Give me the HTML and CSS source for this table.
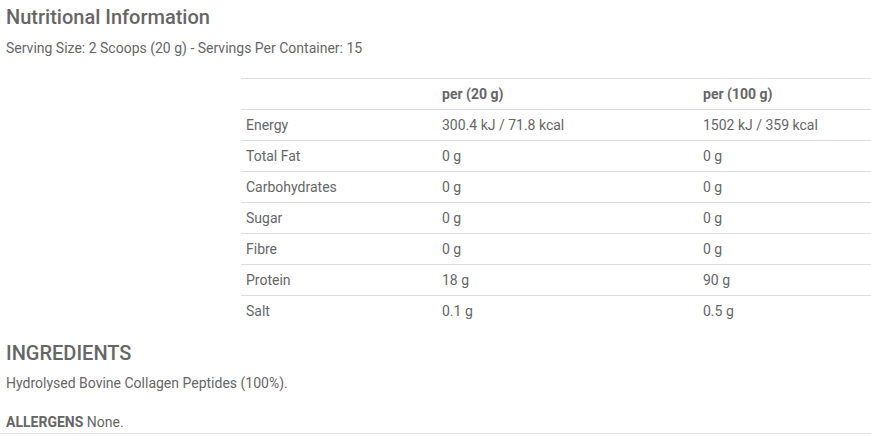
FILE: index.html
```html
<!DOCTYPE html>
<html>
<head>
<meta charset="utf-8">
<link rel="stylesheet" href="styles.css">
</head>
<body>
<div class="page">
  <h2 class="title">Nutritional Information</h2>
  <p class="serving">Serving Size: 2 Scoops (20 g) - Servings Per Container: 15</p>
  <table class="nutri">
    <colgroup>
      <col class="c1"><col class="c2"><col class="c3">
    </colgroup>
    <thead>
      <tr><th></th><th>per (20 g)</th><th>per (100 g)</th></tr>
    </thead>
    <tbody>
      <tr><td>Energy</td><td>300.4 kJ / 71.8 kcal</td><td>1502 kJ / 359 kcal</td></tr>
      <tr><td>Total Fat</td><td>0 g</td><td>0 g</td></tr>
      <tr><td>Carbohydrates</td><td>0 g</td><td>0 g</td></tr>
      <tr><td>Sugar</td><td>0 g</td><td>0 g</td></tr>
      <tr><td>Fibre</td><td>0 g</td><td>0 g</td></tr>
      <tr><td>Protein</td><td>18 g</td><td>90 g</td></tr>
      <tr><td>Salt</td><td>0.1 g</td><td>0.5 g</td></tr>
    </tbody>
  </table>
  <h2 class="title upper">INGREDIENTS</h2>
  <p class="ingredients">Hydrolysed Bovine Collagen Peptides (100%).</p>
  <p class="allergens"><strong>ALLERGENS</strong> None.</p>
</div>
</body>
</html>
```
FILE: styles.css
```css
html, body {
  margin: 0;
  padding: 0;
  background: #fff;
}
body {
  font-family: Roboto, "Liberation Sans", sans-serif;
  color: #666;
  font-size: 14px;
}
.page {
  width: 871px;
  border-bottom: 1px solid #ddd;
  padding-bottom: 3px;
}
.title {
  margin: 0;
  padding: 4px 0 0 6px;
  font-size: 20px;
  font-weight: 500;
  line-height: 26px;
  color: #666;
}
.serving {
  margin: 10px 0 0 6px;
  line-height: 16px;
}
.nutri {
  margin: 22px 0 0 auto;
  width: 630px;
  border-collapse: collapse;
  table-layout: fixed;
}
.c1 { width: 196px; }
.c2 { width: 261px; }
.c3 { width: 173px; }
.nutri th, .nutri td {
  text-align: left;
  padding: 0 5px;
  height: 30px;
  line-height: 16px;
  border-top: 1px solid #ddd;
  vertical-align: middle;
}
.nutri th {
  font-weight: 700;
}
.upper {
  padding-top: 14px;
}
.ingredients {
  margin: 9px 0 0 6px;
  line-height: 16px;
}
.allergens {
  margin: 23px 0 0 6px;
  line-height: 16px;
}
.allergens strong {
  font-weight: 700;
}
```
